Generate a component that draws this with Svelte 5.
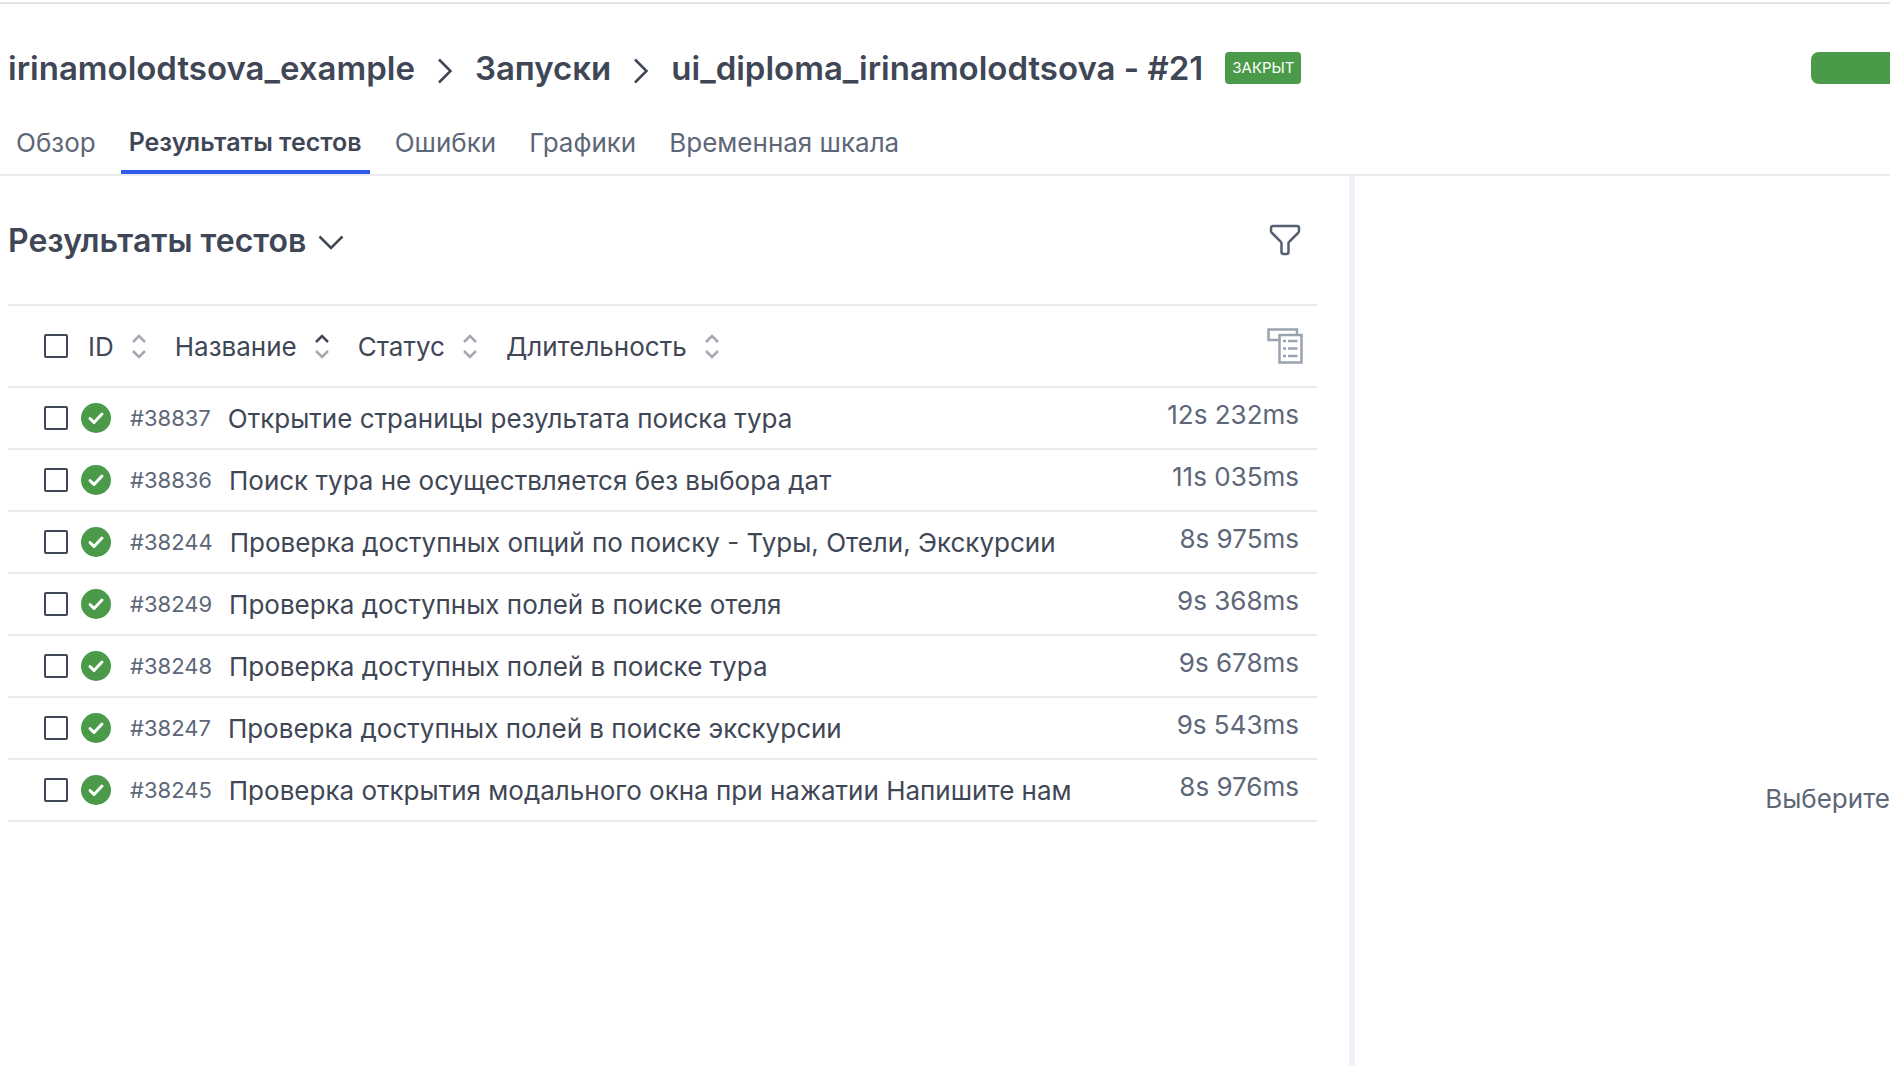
<script>
  const tabs = ['Обзор', 'Результаты тестов', 'Ошибки', 'Графики', 'Временная шкала'];
  let activeTab = $state('Результаты тестов');

  const sorters = [
    { label: 'ID', dir: '' },
    { label: 'Название', dir: 'asc' },
    { label: 'Статус', dir: '' },
    { label: 'Длительность', dir: '' }
  ];

  const results = [
    { id: 38837, name: 'Открытие страницы результата поиска тура', time: '12s 232ms' },
    { id: 38836, name: 'Поиск тура не осуществляется без выбора дат', time: '11s 035ms' },
    { id: 38244, name: 'Проверка доступных опций по поиску - Туры, Отели, Экскурсии', time: '8s 975ms' },
    { id: 38249, name: 'Проверка доступных полей в поиске отеля', time: '9s 368ms' },
    { id: 38248, name: 'Проверка доступных полей в поиске тура', time: '9s 678ms' },
    { id: 38247, name: 'Проверка доступных полей в поиске экскурсии', time: '9s 543ms' },
    { id: 38245, name: 'Проверка открытия модального окна при нажатии Напишите нам', time: '8s 976ms' }
  ];
</script>

{#snippet chevron()}
  <svg class="chevron" width="16" height="32" viewBox="0 0 16 32" aria-hidden="true">
    <path d="M2 7.500l11.500 11.500L2 30.500" />
  </svg>
{/snippet}

<div class="page">
  <header class="top">
    <nav class="crumbs" aria-label="Навигация">
      <a href="#project">irinamolodtsova_example</a>
      {@render chevron()}
      <a href="#launches">Запуски</a>
      {@render chevron()}
      <h1>ui_diploma_irinamolodtsova - #21</h1>
      <span class="badge">ЗАКРЫТ</span>
    </nav>
    <div class="progress"></div>
  </header>

  <nav class="tabs" aria-label="Разделы">
    {#each tabs as tab}
      <button class="tab" class:active={tab === activeTab} onclick={() => (activeTab = tab)}>{tab}</button>
    {/each}
  </nav>

  <main class="panes">
    <section class="list-pane">
      <div class="list-head">
        <button class="view">
          <span>Результаты тестов</span>
          <svg width="28" height="24" viewBox="0 0 28 24" aria-hidden="true"><path d="M2.500 8.500L14 20 25.500 8.500" /></svg>
        </button>
        <button class="icon" aria-label="Фильтр">
          <svg width="32" height="32" viewBox="0 0 32 32" aria-hidden="true">
            <path d="M4 2h24a2 2 0 0 1 2 2v3a3 3 0 0 1-1 2L20.500 17.500a2 2 0 0 0-1 2V28a2 2 0 0 1-2 2h-3a2 2 0 0 1-2-2v-8.500a2 2 0 0 0-1-2L3 9a3 3 0 0 1-1-2V4a2 2 0 0 1 2-2z" />
          </svg>
        </button>
      </div>

      <div class="sort-row">
        <input type="checkbox" aria-label="Выбрать все" />
        {#each sorters as s}
          <button class="sorter">
            <span>{s.label}</span>
            <svg width="16" height="26" viewBox="0 0 16 26" aria-hidden="true">
              <path class:on={s.dir === 'asc'} d="M2 9l6-6 6 6" />
              <path d="M2 18l6 6 6-6" />
            </svg>
          </button>
        {/each}
        <button class="icon tree" aria-label="Группировка">
          <svg width="36" height="36" viewBox="0 0 36 36" aria-hidden="true">
            <path d="M12 12H1.500V1.500h28.500V6M12.500 7h22v27.500h-22z" />
            <path d="M16 13h3M21 13h9.500M16 20.500h3M21 20.500h9.500M16 28h3M21 28h9.500" />
          </svg>
        </button>
      </div>

      <ul>
        {#each results as r}
          <li>
            <input type="checkbox" id="r{r.id}" />
            <svg class="status" width="30" height="30" viewBox="0 0 30 30" role="img" aria-label="Успешно">
              <circle cx="15" cy="15" r="15" />
              <path d="M9 15.500l4 4 8-8.500" />
            </svg>
            <label for="r{r.id}">
              <span class="id">#{r.id}</span>
              <span class="name">{r.name}</span>
            </label>
            <span class="time">{r.time}</span>
          </li>
        {/each}
      </ul>
    </section>

    <section class="detail-pane">
      <p>Выберите</p>
    </section>
  </main>
</div>

<style>
  :global(html) {
    overflow: hidden;
  }
  :global(body) {
    margin: 0;
    background: #fff;
  }
  .page {
    box-sizing: border-box;
    min-height: 100vh;
    margin-top: 2px;
    border-top: 2px solid #e3e3e3;
    display: flex;
    flex-direction: column;
    overflow: hidden;
    font-family: Inter, Roboto, sans-serif;
    font-size: 26px;
    color: #3f4756;
  }
  button {
    padding: 0;
    border: 0;
    background: none;
    font: inherit;
    color: inherit;
    cursor: pointer;
  }
  svg {
    display: block;
    flex: none;
    fill: none;
    stroke: currentColor;
    stroke-width: 2.5;
  }
  .top {
    display: flex;
    align-items: center;
    justify-content: space-between;
    box-sizing: border-box;
    height: 104px;
    padding: 24px 0 0 8px;
  }
  .crumbs {
    display: flex;
    align-items: center;
    gap: 22px;
    font-size: 33px;
    font-weight: 600;
    line-height: 40px;
    white-space: nowrap;
  }
  .crumbs a {
    color: inherit;
    text-decoration: none;
  }
  h1 {
    margin: 0;
    font: inherit;
  }
  .badge {
    padding: 0 7px;
    border-radius: 4px;
    background: #4a9a49;
    color: #fff;
    font-size: 15px;
    font-weight: 400;
    line-height: 32px;
  }
  .progress {
    width: 79px;
    height: 32px;
    border-radius: 8px 0 0 8px;
    background: #4a9a49;
  }
  .tabs {
    display: flex;
    gap: 17px;
    height: 66px;
    padding-left: 8px;
    border-bottom: 2px solid #e8ecf0;
  }
  .tab {
    padding: 6px 8px 0;
    border-bottom: 4px solid transparent;
    color: #5d6778;
    white-space: nowrap;
  }
  .tab.active {
    border-color: #2f5ce8;
    color: #3f4756;
    font-size: 25px;
    font-weight: 600;
  }
  .panes {
    flex: 1;
    display: flex;
  }
  .list-pane {
    flex: 0 1 1349px;
    box-sizing: border-box;
    padding: 0 32px 0 8px;
  }
  .list-head {
    display: flex;
    align-items: center;
    justify-content: space-between;
    height: 128px;
    border-bottom: 2px solid #e8ecf0;
  }
  .view {
    display: flex;
    align-items: center;
    gap: 11px;
    font-size: 32px;
    font-weight: 600;
  }
  .icon {
    margin-right: 16px;
    color: #555f70;
  }
  .sort-row {
    display: flex;
    align-items: center;
    gap: 28px;
    height: 80px;
    padding-left: 36px;
    border-bottom: 2px solid #e8ecf0;
  }
  .sort-row input {
    margin-right: -8px;
  }
  .sorter {
    display: flex;
    align-items: center;
    gap: 17px;
  }
  .sorter svg {
    color: #a4a7b0;
  }
  .sorter .on {
    stroke: #3f4756;
  }
  .tree {
    margin-left: auto;
    margin-right: 14px;
    color: #9aa3b0;
  }
  input {
    appearance: none;
    flex: none;
    width: 24px;
    height: 24px;
    margin: 0;
    border: 2px solid #3f4756;
    border-radius: 2px;
    background: #fff;
  }
  input:checked {
    background: #2f5ce8;
  }
  ul {
    margin: 0;
    padding: 0;
    list-style: none;
  }
  li {
    display: flex;
    align-items: center;
    height: 60px;
    padding: 0 18px 0 36px;
    border-bottom: 2px solid #e8ecf0;
    white-space: nowrap;
  }
  .status {
    margin: 0 19px 0 13px;
    fill: #4a9a49;
    stroke: none;
  }
  .status path {
    fill: none;
    stroke: #fff;
    stroke-width: 3;
    stroke-linecap: round;
    stroke-linejoin: round;
  }
  label {
    display: flex;
    align-items: center;
    gap: 17px;
    flex: 1;
  }
  .id {
    font-size: 22px;
    color: #5d6778;
  }
  .time {
    padding-bottom: 8px;
    color: #5d6778;
  }
  .detail-pane {
    flex: 1 0 0;
    display: flex;
    align-items: center;
    justify-content: flex-end;
    border-left: 6px solid #eef2f7;
    padding-top: 352px;
    overflow: hidden;
  }
  .detail-pane p {
    margin: 0;
    color: #5d6778;
    white-space: nowrap;
  }
</style>
